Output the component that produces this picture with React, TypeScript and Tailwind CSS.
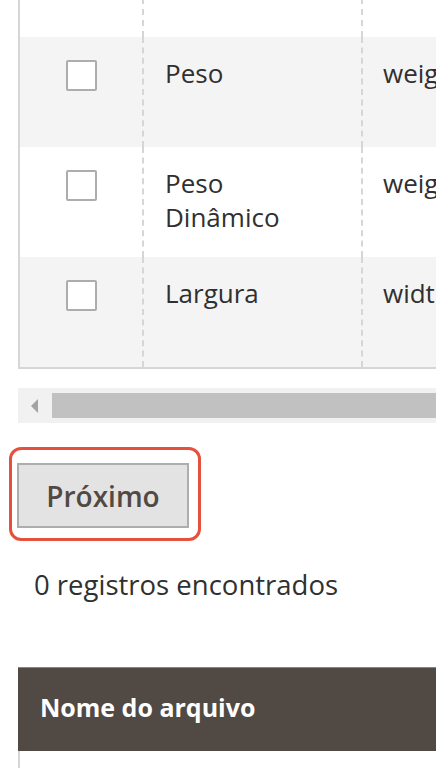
import React from 'react';

const rows = [
  { label: 'Peso', code: 'weight', shade: true },
  { label: 'Peso Dinâmico', code: 'weight_type', shade: false },
  { label: 'Largura', code: 'width', shade: true },
];

const Checkbox = () => (
  <span className="block w-[31px] h-[31px] border-2 border-[#adadad] bg-white rounded-[2px]" />
);

export default function App() {
  return (
    <div className="w-[436px] h-[768px] overflow-hidden bg-white font-['Open_Sans',sans-serif] text-[#303030]">
      {/* Attribute grid (scrolled, top row cut off) */}
      <div className="ml-[18px] -mt-[2px] border-l-2 border-b-2 border-[#d6d6d6] overflow-hidden">
        <div className="flex h-[39px]">
          <div className="w-[124px] shrink-0 border-r-2 border-dashed border-[#d6d6d6]" />
          <div className="w-[219px] shrink-0 border-r-2 border-dashed border-[#d6d6d6]" />
          <div className="flex-1" />
        </div>
        {rows.map((r) => (
          <div key={r.label} className={`flex h-[110px] ${r.shade ? 'bg-[#f4f4f4]' : 'bg-white'}`}>
            <div className="w-[124px] shrink-0 border-r-2 border-dashed border-[#d6d6d6] flex justify-center pt-[23px]">
              <Checkbox />
            </div>
            <div className="w-[219px] shrink-0 border-r-2 border-dashed border-[#d6d6d6] pl-[21px] pr-[26px] pt-[19px] text-[26px] leading-[34px]">
              {r.label}
            </div>
            <div className="flex-1 min-w-0 pl-[20px] pt-[19px] text-[26px] leading-[34px] whitespace-nowrap">
              {r.code}
            </div>
          </div>
        ))}
      </div>

      {/* Horizontal scrollbar */}
      <div className="ml-[18px] mt-[19px] h-[35px] flex bg-[#f1f1f1]">
        <div className="w-[34px] shrink-0 flex items-center justify-center">
          <svg width="8" height="14" viewBox="0 0 8 14">
            <path d="M7 0 L0 7 L7 14 Z" fill="#a3a3a3" />
          </svg>
        </div>
        <div className="flex-1 my-[5px] bg-[#c1c1c1]" />
      </div>

      {/* Next button with highlight */}
      <div className="pl-[17px] pt-[40px]">
        <div className="relative inline-block">
          <span className="absolute -top-[16px] -left-[8px] -right-[12px] -bottom-[13px] border-[3px] border-[#e5513c] rounded-[12px] pointer-events-none" />
          <button className="w-[172px] h-[65px] bg-[#e3e3e3] border-2 border-[#adadad] text-[28px] font-semibold text-[#514943] leading-none">
            Próximo
          </button>
        </div>
      </div>

      <div className="pl-[34px] mt-[38px] text-[27.5px] leading-[37px]">0 registros encontrados</div>

      {/* File grid header */}
      <div className="ml-[18px] mt-[64px]">
        <div className="h-[84px] bg-[#514943] border-t border-[#8a837f] flex items-center pl-[22px] pb-[4px] text-white font-bold text-[25px]">
          Nome do arquivo
        </div>
        <div className="h-[40px] border-l-2 border-[#d6d6d6]" />
      </div>
    </div>
  );
}
